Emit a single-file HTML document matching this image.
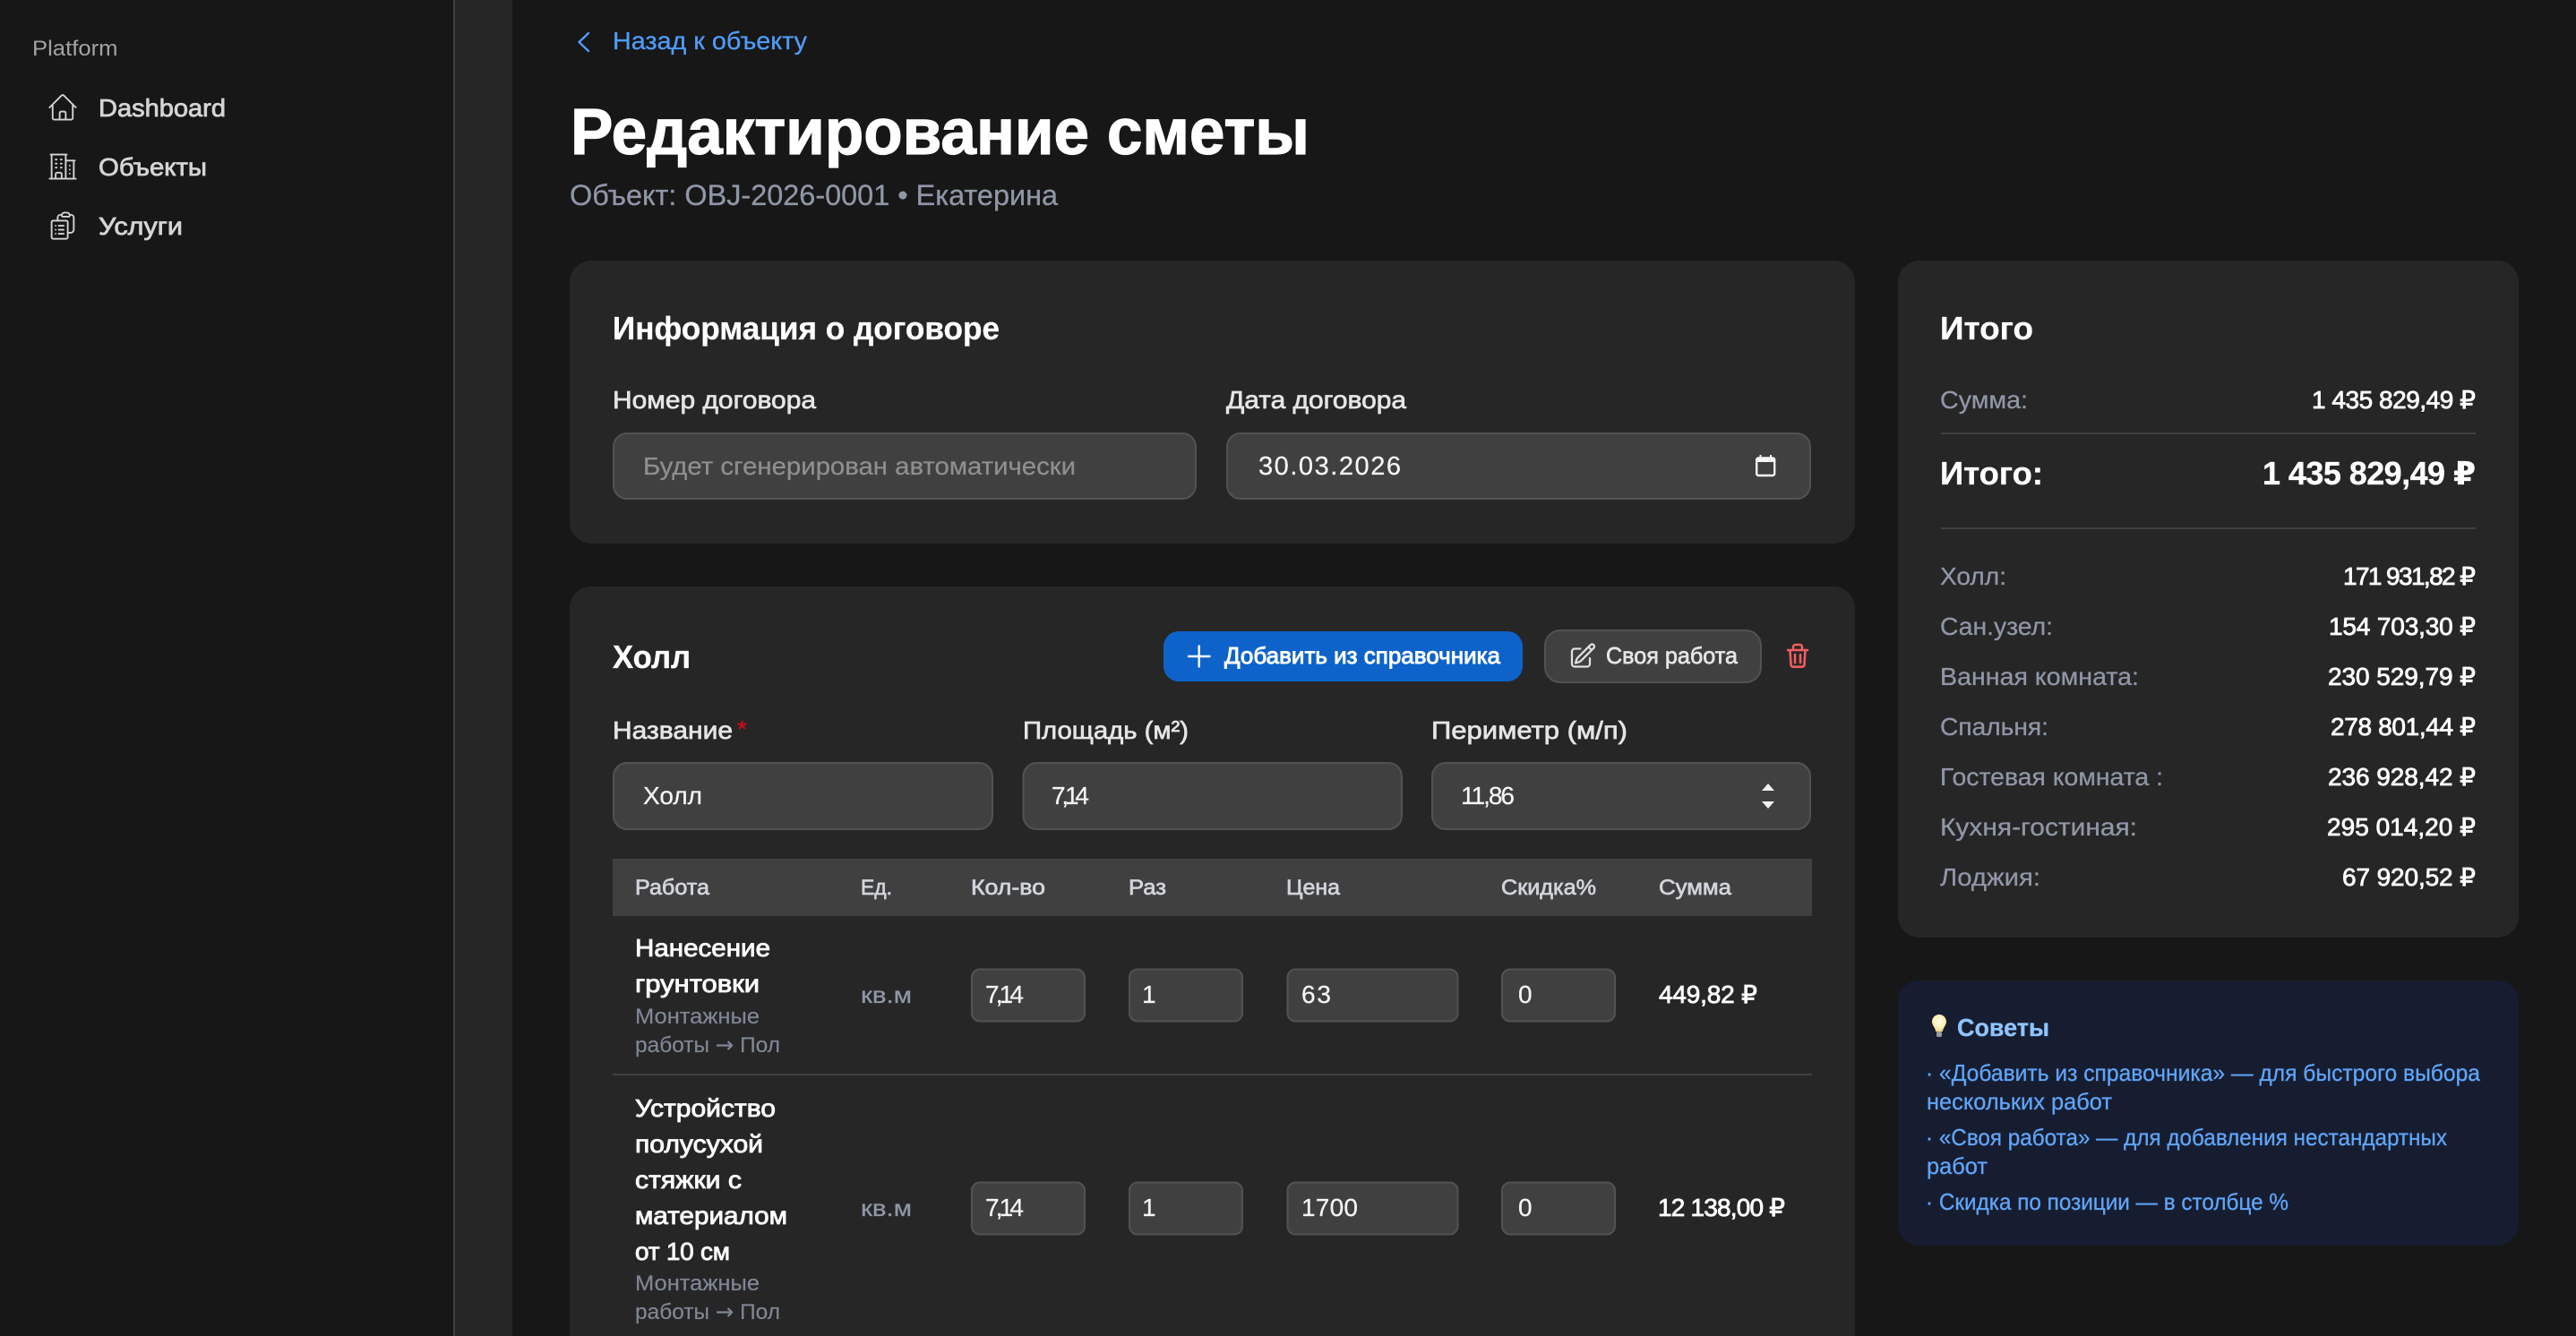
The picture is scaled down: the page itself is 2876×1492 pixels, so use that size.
<!DOCTYPE html>
<html lang="ru">
<head>
<meta charset="utf-8">
<title>Редактирование сметы</title>
<style>
html,body{margin:0;padding:0;background:#171717;width:2876px;height:1492px;overflow:hidden}
svg{display:block}
text{font-family:"Liberation Sans","DejaVu Sans","Noto Sans CJK SC",sans-serif;white-space:pre}
.nav{font-size:28px;fill:#d4d4d4;stroke:#d4d4d4;stroke-width:.8}
.lab{font-size:28px;fill:#e5e5e5;stroke:#e5e5e5;stroke-width:.7}
.h2{font-size:36px;fill:#fff;font-weight:700;stroke:#fff;stroke-width:.3}
.val{font-size:28px;fill:#f5f5f5;stroke:#f5f5f5;stroke-width:.25}
.gr{font-size:28px;fill:#8f96a6;stroke:#8f96a6;stroke-width:.3}
.sum{font-size:28px;fill:#fff;stroke:#fff;stroke-width:.8}
.th{font-size:24px;fill:#d1d5db;stroke:#d1d5db;stroke-width:.7}
.wk{font-size:28px;fill:#fff;stroke:#fff;stroke-width:.85}
.sub{font-size:24px;fill:#7f8695;stroke:#7f8695;stroke-width:.2}
.un{font-size:26px;fill:#8f96a6;stroke:#8f96a6;stroke-width:.3}
.tip{font-size:26px;fill:#5fa5f8;stroke:#5fa5f8;stroke-width:.3}
.inp{fill:#404040;stroke:#525252;stroke-width:2}
.ic{fill:none;stroke:#d4d4d4;stroke-width:1.25;stroke-linecap:round;stroke-linejoin:round}
.ar{font-family:"DejaVu Sans",sans-serif}
</style>
</head>
<body>
<svg xmlns="http://www.w3.org/2000/svg" width="2876" height="1492" viewBox="0 0 2876 1492">
<defs>
<radialGradient id="bulb" cx="50%" cy="40%" r="60%"><stop offset="0" stop-color="#fffde8"/><stop offset=".7" stop-color="#fbeeb0"/><stop offset="1" stop-color="#e9cf7c"/></radialGradient>
</defs>
<rect width="2876" height="1492" fill="#171717"/>
<rect x="506" y="0" width="2" height="1492" fill="#404040"/>
<rect x="508" y="0" width="64" height="1492" fill="#262626"/>

<text x="36" y="62" font-size="24" fill="#a3a3a3" textLength="95.5" lengthAdjust="spacingAndGlyphs">Platform</text>
<g transform="translate(52 102) scale(1.5)" class="ic"><path d="m2.25 12 8.954-8.955c.44-.439 1.152-.439 1.591 0L21.75 12M4.5 9.75v10.125c0 .621.504 1.125 1.125 1.125H9.75v-4.875c0-.621.504-1.125 1.125-1.125h2.25c.621 0 1.125.504 1.125 1.125V21h4.125c.621 0 1.125-.504 1.125-1.125V9.75M8.25 21h8.25"/></g>
<text class="nav" x="110" y="130" textLength="142" lengthAdjust="spacingAndGlyphs">Dashboard</text>
<g transform="translate(52 168) scale(1.5)" class="ic"><path d="M2.25 21h19.5m-18-18v18m10.5-18v18m6-13.5V21M6.75 6.75h.75m-.75 3h.75m-.75 3h.75m3-6h.75m-.75 3h.75m-.75 3h.75M6.75 21v-3.375c0-.621.504-1.125 1.125-1.125h2.25c.621 0 1.125.504 1.125 1.125V21M3 3h12m-.75 4.5H21m-3.75 3.75h.008v.008h-.008v-.008Zm0 3h.008v.008h-.008v-.008Zm0 3h.008v.008h-.008v-.008Z"/></g>
<text class="nav" x="110" y="196" textLength="121" lengthAdjust="spacingAndGlyphs">Объекты</text>
<g transform="translate(52 234) scale(1.5)" class="ic"><path d="M9 12h3.75M9 15h3.75M9 18h3.75m3-.75H18a2.25 2.25 0 0 0 2.25-2.25V6.108c0-1.135-.845-2.098-1.976-2.192a48.424 48.424 0 0 0-1.123-.08m-5.801 0c-.065.21-.1.433-.1.664 0 .414.336.75.75.75h4.5a.75.75 0 0 0 .75-.75 2.25 2.25 0 0 0-.1-.664m-5.8 0A2.251 2.251 0 0 1 13.5 2.25H15c1.012 0 1.867.668 2.15 1.586m-5.8 0c-.376.023-.75.05-1.124.08C9.095 4.01 8.25 4.973 8.25 6.108V8.25m0 0H4.875c-.621 0-1.125.504-1.125 1.125v11.25c0 .621.504 1.125 1.125 1.125h9.75c.621 0 1.125-.504 1.125-1.125V9.375c0-.621-.504-1.125-1.125-1.125H8.25ZM6.75 12h.008v.008H6.75V12Zm0 3h.008v.008H6.75V15Zm0 3h.008v.008H6.75V18Z"/></g>
<text class="nav" x="110" y="262" textLength="94" lengthAdjust="spacingAndGlyphs">Услуги</text>

<path d="M657 37 646.500 47l10.500 10" fill="none" stroke="#4f9cf9" stroke-width="2.400" stroke-linecap="round" stroke-linejoin="round"/>
<text x="684" y="55" font-size="28" fill="#4f9cf9" stroke="#4f9cf9" stroke-width=".3" textLength="217" lengthAdjust="spacingAndGlyphs">Назад к объекту</text>
<text x="637" y="172" font-size="72" font-weight="700" fill="#fff" stroke="#fff" stroke-width="1.200" textLength="825" lengthAdjust="spacingAndGlyphs">Редактирование сметы</text>
<text class="gr" x="636" y="229" style="font-size:32px" textLength="545" lengthAdjust="spacingAndGlyphs">Объект: OBJ-2026-0001 • Екатерина</text>

<rect x="636" y="291" width="1435" height="316" rx="24" fill="#262626"/>
<text class="h2" x="684" y="379" textLength="432" lengthAdjust="spacingAndGlyphs">Информация о договоре</text>
<text class="lab" x="684" y="456" textLength="227" lengthAdjust="spacingAndGlyphs">Номер договора</text>
<rect class="inp" x="685" y="484" width="650" height="73" rx="15"/>
<text x="718" y="530" font-size="28" fill="#8f8f8f" stroke="#8f8f8f" stroke-width=".25" textLength="483" lengthAdjust="spacingAndGlyphs">Будет сгенерирован автоматически</text>
<text class="lab" x="1369" y="456" textLength="201" lengthAdjust="spacingAndGlyphs">Дата договора</text>
<rect class="inp" x="1370" y="484" width="651" height="73" rx="15"/>
<text class="val" x="1405" y="530" style="font-size:29px" textLength="159" lengthAdjust="spacing">30.03.2026</text>
<g>
<rect x="1961.200" y="511.500" width="20" height="19.500" rx="2" fill="none" stroke="#f5f5f5" stroke-width="2.400"/>
<rect x="1961" y="511" width="20.500" height="5" fill="#f5f5f5"/>
<path d="M1965.500 508v3M1977 508v3" stroke="#f5f5f5" stroke-width="2"/>
</g>

<rect x="636" y="655" width="1435" height="860" rx="24" fill="#262626"/>
<text class="h2" x="684" y="746" textLength="87" lengthAdjust="spacingAndGlyphs">Холл</text>
<rect x="1299" y="705" width="401" height="56" rx="17" fill="#0d63c9"/>
<path d="M1327 733h23.500M1338.700 721.500v23" stroke="#fff" stroke-width="2.400" stroke-linecap="round"/>
<text x="1367" y="741" font-size="26" fill="#fff" stroke="#fff" stroke-width=".9" textLength="308" lengthAdjust="spacingAndGlyphs">Добавить из справочника</text>
<rect class="inp" x="1725" y="704" width="241" height="58" rx="17"/>
<g transform="translate(1751 716.500) scale(1.333)" fill="none" stroke="#e0e0e0" stroke-width="1.700" stroke-linecap="round" stroke-linejoin="round"><path d="m16.862 4.487 1.687-1.688a1.875 1.875 0 1 1 2.652 2.652L10.582 16.070a4.500 4.500 0 0 1-1.897 1.130L6 18l.8-2.685a4.500 4.500 0 0 1 1.130-1.897l8.932-8.931Zm0 0L19.500 7.125M18 14v4.750A2.250 2.250 0 0 1 15.750 21H5.250A2.250 2.250 0 0 1 3 18.750V8.250A2.250 2.250 0 0 1 5.250 6H10"/></g>
<text x="1793" y="741" font-size="26" fill="#e5e5e5" stroke="#e5e5e5" stroke-width=".7" textLength="147" lengthAdjust="spacingAndGlyphs">Своя работа</text>
<path d="M1996 726h22M2002 726v-3.500a2.500 2.500 0 0 1 2.500-2.500h5a2.500 2.500 0 0 1 2.500 2.500v3.500M1998.500 726l1 16.500a2.500 2.500 0 0 0 2.500 2.200h10a2.500 2.500 0 0 0 2.500-2.200l1-16.500M2004 731v9M2010 731v9" fill="none" stroke="#f05d62" stroke-width="2.600" stroke-linecap="round" stroke-linejoin="round"/>

<text class="lab" x="684" y="825" textLength="134" lengthAdjust="spacingAndGlyphs">Название</text>
<text x="823" y="823" font-size="26" fill="#c0101a" stroke="#c0101a" stroke-width=".5" textLength="11" lengthAdjust="spacingAndGlyphs">*</text>
<text class="lab" x="1142" y="825" textLength="185" lengthAdjust="spacingAndGlyphs">Площадь (м²)</text>
<text class="lab" x="1598" y="825" textLength="219" lengthAdjust="spacingAndGlyphs">Периметр (м/п)</text>
<rect class="inp" x="685" y="852" width="423" height="74" rx="15"/>
<rect class="inp" x="1142.500" y="852" width="422.500" height="74" rx="15"/>
<rect class="inp" x="1599" y="852" width="422" height="74" rx="15"/>
<text class="val" x="718" y="898" textLength="66" lengthAdjust="spacingAndGlyphs">Холл</text>
<text class="val" x="1174" y="898" textLength="42" lengthAdjust="spacing">7,14</text>
<text class="val" x="1631" y="898" textLength="60" lengthAdjust="spacing">11,86</text>
<path d="M1974 875l7 8h-14ZM1974 903l-7-8h14Z" fill="#f0f0f0"/>

<rect x="684" y="959" width="1339" height="64" fill="#404040"/>
<text class="th" x="709" y="999" textLength="83" lengthAdjust="spacingAndGlyphs">Работа</text>
<text class="th" x="961" y="999" textLength="35" lengthAdjust="spacingAndGlyphs">Ед.</text>
<text class="th" x="1084" y="999" textLength="83" lengthAdjust="spacingAndGlyphs">Кол-во</text>
<text class="th" x="1260" y="999" textLength="42" lengthAdjust="spacingAndGlyphs">Раз</text>
<text class="th" x="1436" y="999" textLength="60" lengthAdjust="spacingAndGlyphs">Цена</text>
<text class="th" x="1676" y="999" textLength="106" lengthAdjust="spacingAndGlyphs">Скидка%</text>
<text class="th" x="1852" y="999" textLength="81" lengthAdjust="spacingAndGlyphs">Сумма</text>

<text class="wk" x="709" y="1068" textLength="151" lengthAdjust="spacingAndGlyphs">Нанесение</text>
<text class="wk" x="709" y="1108" textLength="139" lengthAdjust="spacingAndGlyphs">грунтовки</text>
<text class="sub" x="709" y="1143" textLength="139" lengthAdjust="spacingAndGlyphs">Монтажные</text>
<text class="sub" x="709" y="1175" textLength="162" lengthAdjust="spacingAndGlyphs">работы <tspan class="ar">→</tspan> Пол</text>
<text class="un" x="961" y="1120" textLength="57" lengthAdjust="spacingAndGlyphs">кв.м</text>
<rect class="inp" x="1085" y="1082.500" width="126" height="58" rx="9"/>
<rect class="inp" x="1261" y="1082.500" width="126" height="58" rx="9"/>
<rect class="inp" x="1437.500" y="1082.500" width="190" height="58" rx="9"/>
<rect class="inp" x="1677" y="1082.500" width="126" height="58" rx="9"/>
<text class="val" x="1100" y="1120" textLength="43" lengthAdjust="spacing">7,14</text>
<text class="val" x="1275" y="1120">1</text>
<text class="val" x="1453" y="1120" textLength="33" lengthAdjust="spacing">63</text>
<text class="val" x="1695" y="1120">0</text>
<text class="sum" x="1852" y="1120" textLength="110" lengthAdjust="spacing">449,82 ₽</text>
<rect x="684" y="1199" width="1339" height="2" fill="#404040"/>

<text class="wk" x="709" y="1247" textLength="157" lengthAdjust="spacingAndGlyphs">Устройство</text>
<text class="wk" x="709" y="1287" textLength="143" lengthAdjust="spacingAndGlyphs">полусухой</text>
<text class="wk" x="709" y="1327" textLength="119" lengthAdjust="spacingAndGlyphs">стяжки с</text>
<text class="wk" x="709" y="1367" textLength="170" lengthAdjust="spacingAndGlyphs">материалом</text>
<text class="wk" x="709" y="1407" textLength="106" lengthAdjust="spacing">от 10 см</text>
<text class="sub" x="709" y="1441" textLength="139" lengthAdjust="spacingAndGlyphs">Монтажные</text>
<text class="sub" x="709" y="1473" textLength="162" lengthAdjust="spacingAndGlyphs">работы <tspan class="ar">→</tspan> Пол</text>
<text class="un" x="961" y="1358" textLength="57" lengthAdjust="spacingAndGlyphs">кв.м</text>
<rect class="inp" x="1085" y="1320.500" width="126" height="58" rx="9"/>
<rect class="inp" x="1261" y="1320.500" width="126" height="58" rx="9"/>
<rect class="inp" x="1437.500" y="1320.500" width="190" height="58" rx="9"/>
<rect class="inp" x="1677" y="1320.500" width="126" height="58" rx="9"/>
<text class="val" x="1100" y="1358" textLength="43" lengthAdjust="spacing">7,14</text>
<text class="val" x="1275" y="1358">1</text>
<text class="val" x="1453" y="1358" textLength="63" lengthAdjust="spacing">1700</text>
<text class="val" x="1695" y="1358">0</text>
<text class="sum" x="1851" y="1358" textLength="142" lengthAdjust="spacing">12 138,00 ₽</text>

<rect x="2119" y="291" width="693" height="756" rx="24" fill="#262626"/>
<text class="h2" x="2166" y="379" textLength="104" lengthAdjust="spacingAndGlyphs">Итого</text>
<text class="gr" x="2166" y="456" textLength="98" lengthAdjust="spacingAndGlyphs">Сумма:</text>
<text class="sum" x="2581" y="456" textLength="183" lengthAdjust="spacing">1 435 829,49 ₽</text>
<rect x="2167" y="483" width="597" height="2" fill="#404040"/>
<text class="h2" x="2166" y="541" textLength="115" lengthAdjust="spacingAndGlyphs">Итого:</text>
<text class="h2" x="2526" y="541" textLength="238" lengthAdjust="spacing">1 435 829,49 ₽</text>
<rect x="2167" y="589" width="597" height="2" fill="#404040"/>

<text class="gr" x="2166" y="653" textLength="74" lengthAdjust="spacingAndGlyphs">Холл:</text>
<text class="sum" x="2616" y="653" textLength="148" lengthAdjust="spacing">171 931,82 ₽</text>
<text class="gr" x="2166" y="709" textLength="126" lengthAdjust="spacingAndGlyphs">Сан.узел:</text>
<text class="sum" x="2600" y="709" textLength="164" lengthAdjust="spacing">154 703,30 ₽</text>
<text class="gr" x="2166" y="765" textLength="222" lengthAdjust="spacingAndGlyphs">Ванная комната:</text>
<text class="sum" x="2599" y="765" textLength="165" lengthAdjust="spacing">230 529,79 ₽</text>
<text class="gr" x="2166" y="821" textLength="121" lengthAdjust="spacingAndGlyphs">Спальня:</text>
<text class="sum" x="2602" y="821" textLength="162" lengthAdjust="spacing">278 801,44 ₽</text>
<text class="gr" x="2166" y="877" textLength="249" lengthAdjust="spacingAndGlyphs">Гостевая комната :</text>
<text class="sum" x="2599" y="877" textLength="165" lengthAdjust="spacing">236 928,42 ₽</text>
<text class="gr" x="2166" y="933" textLength="220" lengthAdjust="spacingAndGlyphs">Кухня-гостиная:</text>
<text class="sum" x="2598" y="933" textLength="166" lengthAdjust="spacing">295 014,20 ₽</text>
<text class="gr" x="2166" y="989" textLength="112" lengthAdjust="spacingAndGlyphs">Лоджия:</text>
<text class="sum" x="2615" y="989" textLength="149" lengthAdjust="spacing">67 920,52 ₽</text>

<rect x="2119" y="1095" width="693" height="296" rx="24" fill="#171d30"/>
<path d="M2165 1133c-4.500 0-8 3.500-8 8 0 3.500 2.500 5.500 3.500 8.500l.7 2.500h7.600l.7-2.500c1-3 3.500-5 3.500-8.500 0-4.500-3.500-8-8-8Z" fill="url(#bulb)"/>
<rect x="2162" y="1152" width="6" height="6" rx="1.500" fill="#9a9a9a"/>
<text x="2185" y="1157" font-size="28" font-weight="700" fill="#8fc4ff" stroke="#8fc4ff" stroke-width=".3" textLength="103" lengthAdjust="spacingAndGlyphs">Советы</text>
<text class="tip" x="2150" y="1207" textLength="619" lengthAdjust="spacingAndGlyphs">· «Добавить из справочника» — для быстрого выбора</text>
<text class="tip" x="2151" y="1239" textLength="207" lengthAdjust="spacingAndGlyphs">нескольких работ</text>
<text class="tip" x="2150" y="1279" textLength="582" lengthAdjust="spacingAndGlyphs">· «Своя работа» — для добавления нестандартных</text>
<text class="tip" x="2151" y="1311" textLength="68" lengthAdjust="spacingAndGlyphs">работ</text>
<text class="tip" x="2150" y="1351" textLength="405" lengthAdjust="spacingAndGlyphs">· Скидка по позиции — в столбце %</text>
</svg>
</body>
</html>
